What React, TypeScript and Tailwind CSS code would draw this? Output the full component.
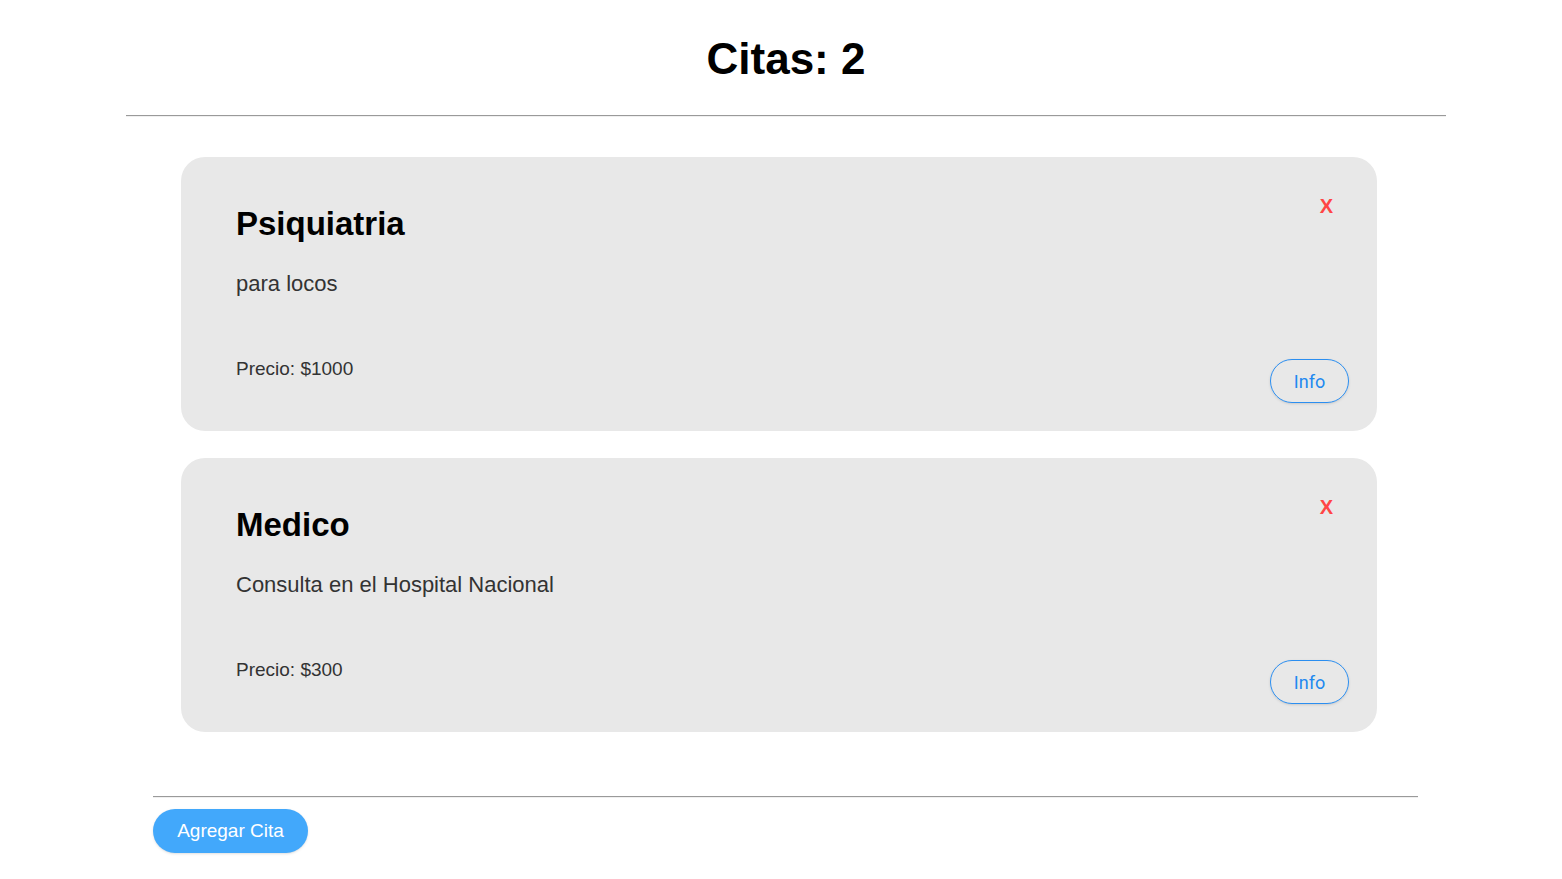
const citas = [
  { id: 1, titulo: "Psiquiatria", descripcion: "para locos", precio: 1000 },
  { id: 2, titulo: "Medico", descripcion: "Consulta en el Hospital Nacional", precio: 300 },
];

function Cita({ titulo, descripcion, precio }: { titulo: string; descripcion: string; precio: number }) {
  return (
    <div className="flex h-[274px] w-[1196px] rounded-[24px] bg-[#e8e8e8] pl-[55px] pr-[28px]">
      <div className="flex flex-1 flex-col pt-[48px]">
        <h2 className="text-[33px] font-bold leading-[38px] text-black">{titulo}</h2>
        <p className="mt-[28px] text-[22px] leading-[25px] text-[#333]">{descripcion}</p>
        <p className="mt-[62px] text-[19px] leading-[22px] text-[#333]">Precio: ${precio}</p>
      </div>
      <div className="flex flex-col items-end justify-between pt-[38px] pb-[28px]">
        <button className="mr-[16px] text-[20px] font-bold leading-[23px] text-[#ff4545]">X</button>
        <button className="h-[44px] w-[79px] rounded-full border border-[#2b8ef0] font-['Roboto',sans-serif] text-[18px] text-[#2188f0] shadow-sm">
          Info
        </button>
      </div>
    </div>
  );
}

export default function App() {
  return (
    <div className="min-h-[879px] bg-white font-['Liberation_Sans',Arial,sans-serif]">
      <div className="ml-[126px] w-[1320px] pt-[36px]">
        <h1 className="text-center text-[44px] font-bold leading-[46px] text-black">Citas: {citas.length}</h1>
        <hr className="mt-[33px] border-t border-b border-t-[#9a9a9a] border-b-[#f0f0f0]" />
        <div className="ml-[55px] mt-[40px] flex flex-col gap-[27px]">
          {citas.map((c) => (
            <Cita key={c.id} titulo={c.titulo} descripcion={c.descripcion} precio={c.precio} />
          ))}
        </div>
        <div className="ml-[27px] mt-[64px] w-[1265px]">
          <hr className="border-t border-b border-t-[#9a9a9a] border-b-[#f0f0f0]" />
          <button className="mt-[11px] h-[44px] w-[155px] rounded-full bg-[#42a8fb] text-[19px] text-white shadow-sm">
            Agregar Cita
          </button>
        </div>
      </div>
    </div>
  );
}
